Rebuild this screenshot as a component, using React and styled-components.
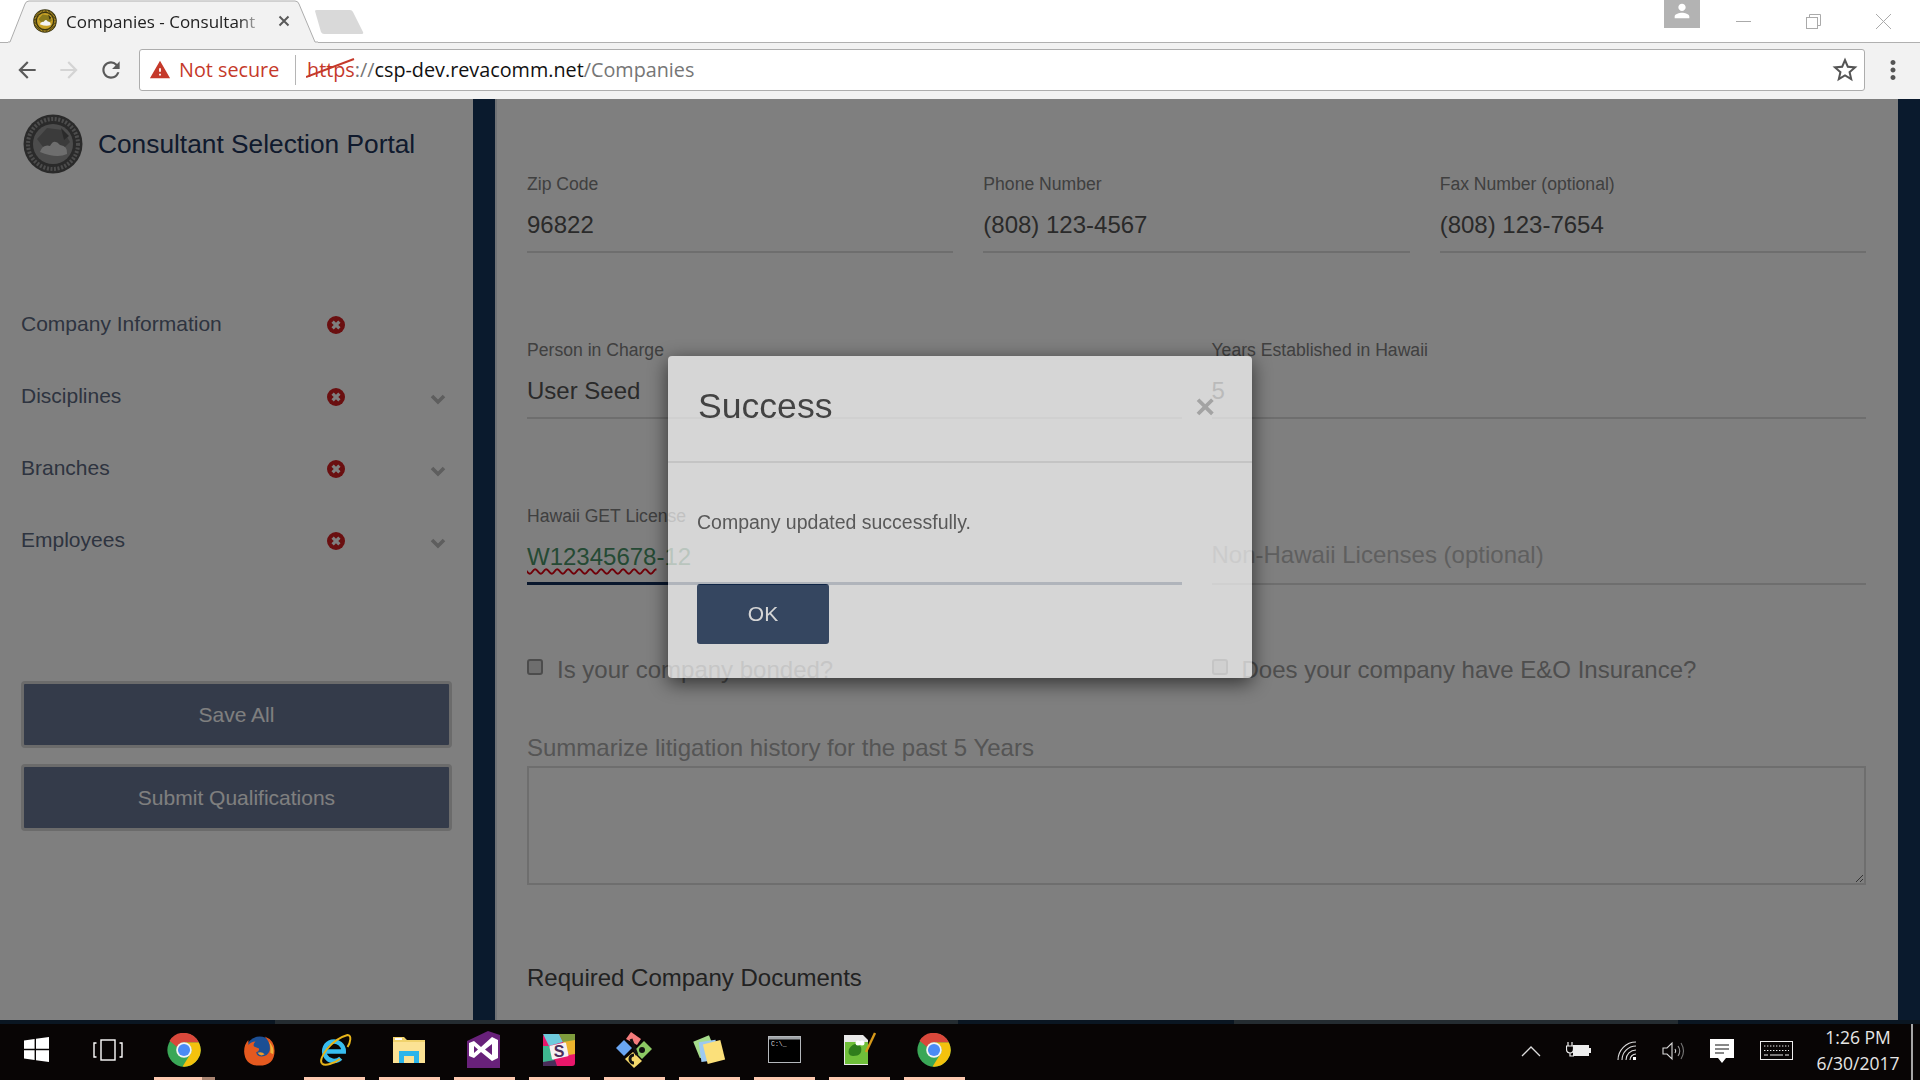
import React from 'react';
import styled, { createGlobalStyle } from 'styled-components';
import { MdArrowBack, MdArrowForward, MdRefresh, MdStarBorder, MdMoreVert, MdWarning, MdPerson } from 'react-icons/md';

const GlobalStyle = createGlobalStyle`
  html, body { margin: 0; padding: 0; background: #fff; }
  * { box-sizing: border-box; }
`;

const Screen = styled.div`
  width: 1920px;
  height: 1080px;
  display: flex;
  flex-direction: column;
  overflow: hidden;
  font-family: 'Liberation Sans', Arial, sans-serif;
`;

/* browser chrome */
const TabStrip = styled.div`
  height: 43px;
  display: flex;
  align-items: flex-start;
  background: #fff;
  border-bottom: 1px solid #b0b0b0;
  padding-left: 8px;
  font-family: 'Open Sans', sans-serif;
`;

const Tab = styled.div`
  position: relative;
  width: 310px;
  height: 43px;
  display: flex;
  align-items: center;
  padding: 0 0 1px 25px;
  gap: 9px;
`;

const TabShape = styled.svg`
  position: absolute;
  left: 0;
  top: 0;
`;

const TabIcon = styled.div`
  position: relative;
  display: flex;
`;

const TabTitle = styled.div`
  position: relative;
  width: 192px;
  font-size: 17px;
  color: #222;
  white-space: nowrap;
  -webkit-mask-image: linear-gradient(90deg, #000 90%, rgba(0, 0, 0, 0.25) 100%);
  mask-image: linear-gradient(90deg, #000 90%, rgba(0, 0, 0, 0.25) 100%);
`;

const TabClose = styled.svg`
  position: relative;
  margin-left: 11px;
`;

const NewTab = styled.svg`
  margin: 9px 0 0 -4px;
`;

const StripSpacer = styled.div`
  flex: 1;
`;

const Profile = styled.div`
  width: 36px;
  height: 28px;
  background: #b3b3b3;
  color: #fff;
  display: flex;
  justify-content: center;
  font-size: 22px;
`;

const WindowButtons = styled.div`
  display: flex;
  align-items: center;
  height: 42px;
  padding: 0 29px 0 36px;
  gap: 55px;
`;

const Toolbar = styled.div`
  height: 56px;
  background: #f2f2f2;
  display: flex;
  align-items: center;
  padding: 0 0 2px 14px;
  font-family: 'Open Sans', sans-serif;
`;

const NavButton = styled.div`
  width: 26px;
  display: flex;
  justify-content: center;
  margin-right: 16px;
  font-size: 28px;
  color: ${props => (props.disabled ? '#d4d4d4' : '#5a5a5a')};
`;

const Omnibox = styled.div`
  width: 1726px;
  height: 42px;
  margin-left: -1px;
  background: #fff;
  border: 1px solid #adadad;
  border-radius: 3px;
  display: flex;
  align-items: center;
  padding: 0 3px 1px 9px;
  font-size: 19.8px;
  white-space: nowrap;
`;

const SecurityWarning = styled.div`
  display: flex;
  align-items: center;
  gap: 8px;
  width: 147px;
  height: 30px;
  color: #c5392a;
  border-right: 1px solid #b5b5b5;
  margin-right: 11px;
`;

const UrlScheme = styled.span`
  position: relative;
  color: #c5392a;
`;

const Strike = styled.svg`
  position: absolute;
  left: -1px;
  top: 1px;
`;

const UrlDim = styled.span`
  color: #767676;
`;

const UrlHost = styled.span`
  color: #111;
`;

const UrlFill = styled.div`
  flex: 1;
`;

const StarButton = styled.div`
  display: flex;
  font-size: 30px;
  color: #555;
  margin-right: 1px;
`;

const MenuDots = styled.div`
  display: flex;
  width: 55px;
  justify-content: center;
  font-size: 30px;
  color: #555;
`;

/* page */
const Viewport = styled.div`
  position: relative;
  height: 921px;
  display: flex;
  overflow: hidden;
`;

const Sidebar = styled.aside`
  width: 473px;
  flex: none;
  background: #fff;
  padding: 15px 0 0 21px;
`;

const Brand = styled.div`
  display: flex;
  align-items: center;
  height: 60px;
  padding-left: 2px;
  gap: 15px;
  margin-bottom: 114px;
`;

const BrandName = styled.div`
  font-size: 26.3px;
  padding-top: 1px;
  color: #20345a;
`;

const MenuRow = styled.div`
  height: 72px;
  display: flex;
  align-items: center;
`;

const MenuName = styled.div`
  width: 306px;
  font-size: 21px;
  color: #5c6880;
`;

const ErrorMark = styled.svg`
  margin-top: 2px;
`;

const Chevron = styled.svg`
  margin: 6px 0 0 85px;
`;

const SideButton = styled.button`
  display: block;
  width: 431px;
  height: 67px;
  margin-bottom: 16px;
  background: #687694;
  border: 3px solid #d6d6d6;
  border-radius: 4px;
  color: #fff;
  font-family: inherit;
  font-size: 21px;
  &:first-of-type { margin-top: 105px; }
`;

const Rail = styled.div`
  width: ${props => props.$width}px;
  flex: none;
  background: #14345a;
  border-right: ${props => (props.$edge ? '2px solid #dfe3e8' : 'none')};
`;

const Main = styled.main`
  flex: 1;
  background: #fff;
  padding: 75px 32px 0 30px;
`;

const FieldRow = styled.div`
  display: grid;
  grid-template-columns: repeat(${props => props.$cols}, 1fr);
  gap: 30px;
  margin-bottom: 87px;
`;

const FieldLabel = styled.div`
  height: 20px;
  line-height: 20px;
  font-size: 17.6px;
  color: #808080;
  white-space: nowrap;
`;

const FieldValue = styled.div`
  height: 59px;
  padding-top: ${props => (props.$empty ? '15px' : '17px')};
  line-height: 28px;
  font-size: 24px;
  color: ${props => (props.$green ? '#4a9468' : props.$empty ? '#bebebe' : '#555')};
  border-bottom: ${props => (props.$focused ? '3px solid #122e5a' : '2px solid #dcdcdc')};
  white-space: nowrap;
`;

const Misspelt = styled.span`
  text-decoration: underline wavy #e00010 1.5px;
  text-underline-offset: 3px;
`;

const CheckRow = styled.div`
  display: grid;
  grid-template-columns: repeat(2, 1fr);
  gap: 30px;
  margin: -16px 0 50px;
`;

const CheckLabel = styled.label`
  display: flex;
  align-items: center;
  gap: 14px;
  font-size: 24px;
  line-height: 28px;
  color: #9c9c9c;
`;

const CheckBox = styled.span`
  width: 16px;
  height: 16px;
  margin-top: -6px;
  background: #ddd;
  border: 2px solid #999;
  border-radius: 3px;
`;

const AreaLabel = styled.div`
  font-size: 24px;
  line-height: 28px;
  color: #aaa;
  margin-bottom: 4px;
`;

const Area = styled.textarea`
  display: block;
  width: 100%;
  height: 119px;
  border: 2px solid #dcdcdc;
  background: #fff;
  resize: vertical;
  outline: none;
  margin-bottom: 79px;
`;

const SectionTitle = styled.div`
  font-size: 24px;
  line-height: 28px;
  color: #444;
`;

/* success dialog */
const Backdrop = styled.div`
  position: absolute;
  inset: 0;
  background: rgba(0, 0, 0, 0.5);
  display: flex;
  justify-content: center;
  align-items: flex-start;
  padding-top: 257px;
`;

const Dialog = styled.div`
  width: 584px;
  height: 322px;
  background: #fff;
  border-radius: 4px;
  opacity: 0.677;
  box-shadow: 0 5px 20px rgba(0, 0, 0, 0.9);
`;

const DialogHeader = styled.div`
  height: 107px;
  display: flex;
  align-items: center;
  justify-content: space-between;
  padding: 0 37px 4px 30px;
  border-bottom: 2px solid #e5e5e5;
`;

const DialogTitle = styled.h4`
  margin: 0;
  font-size: 35.6px;
  font-weight: normal;
  color: #282828;
`;

const DialogClose = styled.span`
  font-size: 34px;
  font-weight: bold;
  line-height: 1;
  padding-bottom: 2px;
  color: #b4b4b4;
`;

const DialogBody = styled.div`
  padding: 47px 0 0 29px;
`;

const Message = styled.div`
  height: 24px;
  line-height: 24px;
  font-size: 19.5px;
  color: #484848;
  margin-bottom: 50px;
`;

const OkButton = styled.button`
  width: 132px;
  height: 60px;
  background: #132c52;
  border: none;
  border-radius: 3px;
  color: #fff;
  font-family: inherit;
  font-size: 21px;
`;

/* taskbar */
const Taskbar = styled.div`
  height: 60px;
  background: #080505;
  display: flex;
  flex-direction: column;
  font-family: 'Open Sans', sans-serif;
`;

const ScrollBand = styled.div`
  height: 4px;
  flex: none;
  display: flex;
  background: #0a1622;
`;

const BandPiece = styled.div`
  width: ${props => props.$w}px;
  background: ${props => (props.$lit ? '#242c31' : 'transparent')};
`;

const TaskRow = styled.div`
  flex: 1;
  display: flex;
  align-items: stretch;
`;

const SysButton = styled.div`
  width: ${props => props.$w}px;
  display: flex;
  align-items: center;
  justify-content: center;
  padding-bottom: 5px;
`;

const TaskView = styled.svg`
  margin-right: 4px;
`;

const AppTile = styled.div`
  width: 61px;
  margin: 0 7px;
  padding: 0 1px 2px 0;
  display: flex;
  align-items: center;
  justify-content: center;
  border-bottom: 3px solid ${props => (props.$open ? '#fcc9b0' : 'transparent')};
  ${props => props.$split && 'border-image: linear-gradient(90deg, #fcc9b0 77%, #a98572 77%) 1;'}
`;

const Tray = styled.div`
  margin-left: auto;
  display: flex;
  align-items: center;
  padding-right: 7px;
`;

const TraySlot = styled.div`
  width: ${props => props.$w}px;
  display: flex;
  justify-content: center;
  padding-bottom: 2px;
`;

const Clock = styled.div`
  width: 96px;
  margin-left: 5px;
  padding-bottom: 4px;
  text-align: center;
  color: #e6e6e6;
  font-size: 17.5px;
  line-height: 26px;
`;

const DesktopEdge = styled.div`
  width: 2px;
  align-self: stretch;
  background: #a5a5a5;
  margin-left: 5px;
`;

const Seal = ({ size, ring, inner, land, cloud }) => (
  <svg width={size} height={size} viewBox="0 0 60 60">
    <circle cx="30" cy="30" r="29.5" fill={ring} />
    <circle cx="30" cy="30" r="25" fill="none" stroke={inner} strokeWidth="4" strokeDasharray="2 1.6" />
    <circle cx="30" cy="30" r="20" fill={inner} />
    <path d="M14 25 L24 14 L40 16 L47 28 L42 33 L20 33 Z" fill={land} />
    <path d="M17 38 Q20 30 27 32 Q31 24 37 31 Q45 32 44 40 Q34 45 17 38 Z" fill={cloud} />
    <path d="M38 14 L46 22 L41 26 Z" fill={ring} />
  </svg>
);

const ErrorIcon = () => (
  <ErrorMark width="18" height="18" viewBox="0 0 18 18">
    <circle cx="9" cy="9" r="9" fill="#d41e20" />
    <path d="M5.6 5.6 L12.4 12.4 M12.4 5.6 L5.6 12.4" stroke="#fff" strokeWidth="3.2" />
  </ErrorMark>
);

const DownIcon = () => (
  <Chevron width="16" height="11" viewBox="0 0 16 11">
    <path d="M2 2 L8 8 L14 2" fill="none" stroke="#bcbcbc" strokeWidth="3.6" />
  </Chevron>
);

const ChromeIcon = () => (
  <svg width="34" height="34" viewBox="0 0 48 48">
    <circle cx="24" cy="24" r="23.5" fill="#3aa757" />
    <path d="M3.6 11 A23.5 23.5 0 0 1 45 13.5 H24 A10.5 10.5 0 0 0 14.6 20 Z" fill="#d9483b" />
    <path d="M45 13.5 A23.5 23.5 0 0 1 22 47.4 L33 29.5 A10.5 10.5 0 0 0 24 13.5 Z" fill="#f4c20d" />
    <circle cx="24" cy="24" r="11" fill="#f4f4f4" />
    <circle cx="24" cy="24" r="8.6" fill="#4b8bf5" />
  </svg>
);

const FirefoxIcon = () => (
  <svg width="34" height="34" viewBox="0 0 48 48">
    <circle cx="25" cy="25" r="20" fill="#1c4f94" />
    <path d="M32 5 Q46 10 46 25 Q46 46 24 46 Q4 46 3 26 Q3 16 9 10 L9 17 Q13 12 19 12 Q15 16 17 19 L24 22 Q25 26 20 27 Q21 33 28 33 Q36 33 39 25 Q41 14 32 5 Z" fill="#e4591f" />
    <path d="M38 12 Q46 20 44 30 L40 28 Q41 18 38 12 Z" fill="#f0b43a" />
    <path d="M22 28 Q28 26 32 30 Q26 34 22 28 Z" fill="#f09a28" />
  </svg>
);

const EdgeIcon = () => (
  <svg width="36" height="36" viewBox="0 0 48 48">
    <path d="M13 26 H37 A13 13 0 1 0 33 35" fill="none" stroke="#37bdf0" strokeWidth="6" />
    <path d="M8 42 C2 36 20 10 42 4 C48 4 46 14 42 20" fill="none" stroke="#e8b51a" strokeWidth="2.6" />
    <path d="M8 42 C12 46 24 42 32 36" fill="none" stroke="#e8b51a" strokeWidth="2.6" />
  </svg>
);

const FolderIcon = () => (
  <svg width="34" height="30" viewBox="0 0 34 30">
    <path d="M1 2 H12 L15 5 H33 V28 H1 Z" fill="#f0d26c" />
    <path d="M1 7 H33 V28 H1 Z" fill="#fbe294" />
    <rect x="3" y="3" width="7" height="2" fill="#fff" />
    <path d="M7 28 V16 H27 V28 H22 V21 H12 V28 Z" fill="#2bb5ea" />
  </svg>
);

const VsIcon = () => (
  <svg width="36" height="38" viewBox="0 0 36 38">
    <path d="M1 10 L22 0 L34 4 V37 L22 37 L1 37 Z" fill="#68217a" />
    <path d="M3 12 L8 10 L15 16 L26 6 L32 9 V27 L26 30 L15 21 L8 27 L3 25 Z M8 15 V22 L12 18.5 Z M26 13 L19 18.5 L26 24 Z" fill="#fff" fillRule="evenodd" />
  </svg>
);

const SlackIcon = () => (
  <svg width="32" height="32" viewBox="0 0 32 32">
    <rect width="32" height="32" rx="3" fill="#e9176b" />
    <path d="M0 0 H16 L20 8 L6 12 Z" fill="#6ecadc" />
    <path d="M16 0 H32 V8 L20 8 Z" fill="#7e9c3d" />
    <path d="M20 8 L32 6 V20 L26 21 Z" fill="#ecb32d" />
    <path d="M6 12 L12 28 L0 32 V12 Z" fill="#3eb890" />
    <path d="M0 28 L12 26 L14 32 H0 Z" fill="#4a2d5a" />
    <rect x="7.5" y="10" width="17" height="14" rx="1" fill="#f5f0f2" transform="rotate(-12 16 17)" />
    <text x="16" y="22.5" textAnchor="middle" fontFamily="'Liberation Sans'" fontWeight="bold" fontSize="16" fill="#4a2d5a">S</text>
  </svg>
);

const KrakenIcon = () => (
  <svg width="38" height="38" viewBox="0 0 38 38">
    <path d="M11 8 L16 1 L26 8 L22 14 Z" fill="#f47c7c" />
    <path d="M9 9 L17 17 L9 25 L1 17 Z" fill="#6aa6f2" />
    <path d="M29 10 L37 18 L27 28 L19 20 Z" fill="#8cc964" />
    <path d="M18 21 L27 30 L19 37 L10 28 Z" fill="#f6d96b" />
    <path d="M16 8 L22 24 M19 24 A4 4 0 1 0 19 32" stroke="#111" strokeWidth="3" fill="none" />
    <circle cx="27" cy="19" r="3" fill="#111" />
  </svg>
);

const NotesIcon = () => (
  <svg width="34" height="34" viewBox="0 0 34 34">
    <rect x="4" y="5" width="17" height="18" fill="#a6dc8c" transform="rotate(-22 12 14)" />
    <rect x="8" y="8" width="17" height="20" fill="#9cc9f0" transform="rotate(-8 16 18)" />
    <rect x="13" y="9" width="18" height="20" fill="#fbe07a" transform="rotate(-14 22 19)" />
  </svg>
);

const ConsoleIcon = () => (
  <svg width="33" height="27" viewBox="0 0 33 27">
    <rect x="0.5" y="0.5" width="32" height="26" fill="#000" stroke="#b4b8bc" />
    <rect x="1" y="1" width="31" height="2.5" fill="#9ea2a6" />
    <text x="3" y="10" fontFamily="'Liberation Mono'" fontSize="6.5" fill="#ddd">C:\_</text>
  </svg>
);

const NotepadIcon = () => (
  <svg width="36" height="36" viewBox="0 0 36 36">
    <path d="M3 3 H22 L27 8 V33 H3 Z" fill="#e8e8e8" />
    <rect x="4" y="10" width="23" height="22" fill="#6fbf3a" />
    <path d="M8 17 Q14 8 20 15 Q22 24 12 24 Q6 24 8 17 Z" fill="#2f7d1c" />
    <circle cx="17" cy="11" r="2.5" fill="#fff" />
    <circle cx="21" cy="11" r="2.5" fill="#fff" />
    <path d="M25 20 L34 1" stroke="#d89a1a" strokeWidth="2.4" />
  </svg>
);

const WindowsLogo = () => (
  <svg width="25" height="25" viewBox="0 0 25 25">
    <path d="M0 3.6 L10.6 2 V11.8 H0 Z M12 1.8 L25 0 V11.8 H12 Z M0 13.2 H10.6 V23 L0 21.4 Z M12 13.2 H25 V25 L12 23.2 Z" fill="#fff" />
  </svg>
);

const TaskViewIcon = () => (
  <TaskView width="30" height="22" viewBox="0 0 30 22" fill="none" stroke="#fff" strokeWidth="1.4">
    <rect x="8" y="1" width="14" height="20" />
    <path d="M3.5 4 H1 V18 H3.5 M26.5 4 H29 V18 H26.5" />
  </TaskView>
);

const CaretIcon = () => (
  <svg width="20" height="12" viewBox="0 0 20 12">
    <path d="M1 11 L10 2 L19 11" fill="none" stroke="#ddd" strokeWidth="1.3" />
  </svg>
);

const PowerIcon = () => (
  <svg width="26" height="20" viewBox="0 0 26 20">
    <path d="M2 1 V5 M6 1 V5 M0.5 5 H7.5 V8 Q7.5 12 4 12 Q0.5 12 0.5 8 Z M4 12 V15 H8" fill="none" stroke="#eee" strokeWidth="1.2" />
    <rect x="7" y="4" width="16" height="11" fill="#eee" />
    <rect x="23" y="7" width="2" height="5" fill="#eee" />
  </svg>
);

const WifiIcon = () => (
  <svg width="20" height="20" viewBox="0 0 20 20" fill="none" stroke="#ddd" strokeWidth="1.1">
    <path d="M1 19 A18 18 0 0 1 19 1" />
    <path d="M5 19 A14 14 0 0 1 19 5" />
    <path d="M9 19 A10 10 0 0 1 19 9" />
    <path d="M13 19 A6 6 0 0 1 19 13" />
    <rect x="16" y="16" width="3" height="3" fill="#fff" stroke="none" />
  </svg>
);

const VolumeIcon = () => (
  <svg width="24" height="20" viewBox="0 0 24 20" fill="none" stroke="#ddd" strokeWidth="1.1">
    <path d="M1 7 H5 L10 2 V18 L5 13 H1 Z" />
    <path d="M13 8 Q14.5 10 13 12" />
    <path d="M16 5 Q19.5 10 16 15" stroke="#999" />
    <path d="M19 2 Q24 10 19 18" stroke="#777" />
  </svg>
);

const ActionCenterIcon = () => (
  <svg width="24" height="25" viewBox="0 0 24 25">
    <path d="M0 0 H24 V19 H16 L12 24 L8 19 H0 Z" fill="#fff" />
    <path d="M5 6 H19 M5 10 H19 M5 14 H14" stroke="#111" strokeWidth="1.2" />
  </svg>
);

const KeyboardIcon = () => (
  <svg width="33" height="20" viewBox="0 0 33 20" fill="none" stroke="#eee">
    <rect x="0.5" y="0.5" width="32" height="18" strokeWidth="1" />
    <path d="M4 5 H29 M4 9.5 H29" strokeDasharray="1.4 1.6" />
    <path d="M4 14 H8 M10 14 H23 M25 14 H29" />
  </svg>
);

const tiles = [
  { key: 'chrome', icon: <ChromeIcon />, open: true, split: true },
  { key: 'firefox', icon: <FirefoxIcon /> },
  { key: 'ie', icon: <EdgeIcon />, open: true },
  { key: 'explorer', icon: <FolderIcon />, open: true },
  { key: 'vs', icon: <VsIcon />, open: true },
  { key: 'slack', icon: <SlackIcon />, open: true },
  { key: 'kraken', icon: <KrakenIcon />, open: true },
  { key: 'notes', icon: <NotesIcon />, open: true },
  { key: 'console', icon: <ConsoleIcon />, open: true },
  { key: 'notepad', icon: <NotepadIcon />, open: true },
  { key: 'chrome2', icon: <ChromeIcon />, open: true },
];

const menu = [
  { name: 'Company Information' },
  { name: 'Disciplines', more: true },
  { name: 'Branches', more: true },
  { name: 'Employees', more: true },
];

const Field = ({ label, children, ...rest }) => (
  <div>
    <FieldLabel>{label}</FieldLabel>
    <FieldValue {...rest}>{children}</FieldValue>
  </div>
);

const App = () => (
  <Screen>
    <GlobalStyle />
    <TabStrip>
      <Tab>
        <TabShape width="310" height="43" viewBox="0 0 310 43">
          <path d="M0 42 H2 L17 4 Q18 1 21 1 H287 Q290 1 291 4 L307 42 H310 V43 H0 Z" fill="#f2f2f2" />
          <path d="M0 42 H2 L17 4 Q18 1 21 1 H287 Q290 1 291 4 L307 42 H310" fill="none" stroke="#adadad" />
        </TabShape>
        <TabIcon>
          <Seal size={24} ring="#3a3410" inner="#c9a227" land="#8a7a1c" cloud="#f4f4f4" />
        </TabIcon>
        <TabTitle>Companies - Consultant</TabTitle>
        <TabClose width="12" height="12" viewBox="0 0 12 12">
          <path d="M1.5 1.5 L10.5 10.5 M10.5 1.5 L1.5 10.5" stroke="#5a5a5a" strokeWidth="2" />
        </TabClose>
      </Tab>
      <NewTab width="50" height="26" viewBox="0 0 50 26">
        <path d="M1 2 Q1 1 3 1 H36 Q38 1 39 3 L49 23 Q50 25 47 25 H10 Q8 25 7 23 Z" fill="#d9d9d9" />
      </NewTab>
      <StripSpacer />
      <Profile><MdPerson /></Profile>
      <WindowButtons>
        <svg width="15" height="15" viewBox="0 0 15 15"><path d="M0 7.5 H15" stroke="#aaa" /></svg>
        <svg width="15" height="15" viewBox="0 0 15 15" fill="none" stroke="#aaa"><path d="M3.5 3 V0.5 H14.5 V11.5 H12" /><rect x="0.5" y="3.5" width="11" height="11" /></svg>
        <svg width="15" height="15" viewBox="0 0 15 15"><path d="M0 0 L15 15 M15 0 L0 15" stroke="#aaa" /></svg>
      </WindowButtons>
    </TabStrip>
    <Toolbar>
      <NavButton><MdArrowBack /></NavButton>
      <NavButton disabled><MdArrowForward /></NavButton>
      <NavButton><MdRefresh /></NavButton>
      <Omnibox>
        <SecurityWarning>
          <MdWarning size={22} />
          <span>Not secure</span>
        </SecurityWarning>
        <UrlScheme>
          https
          <Strike width="50" height="24" viewBox="0 0 50 24">
            <path d="M0 20 L48 2" stroke="#c5392a" strokeWidth="2" />
          </Strike>
        </UrlScheme>
        <UrlDim>://</UrlDim>
        <UrlHost>csp-dev.revacomm.net</UrlHost>
        <UrlDim>/Companies</UrlDim>
        <UrlFill />
        <StarButton><MdStarBorder /></StarButton>
      </Omnibox>
      <MenuDots><MdMoreVert /></MenuDots>
    </Toolbar>
    <Viewport>
      <Sidebar>
        <Brand>
          <Seal size={60} ring="#555" inner="#999" land="#777" cloud="#ddd" />
          <BrandName>Consultant Selection Portal</BrandName>
        </Brand>
        {menu.map(item => (
          <MenuRow key={item.name}>
            <MenuName>{item.name}</MenuName>
            <ErrorIcon />
            {item.more && <DownIcon />}
          </MenuRow>
        ))}
        <SideButton>Save All</SideButton>
        <SideButton>Submit Qualifications</SideButton>
      </Sidebar>
      <Rail $width={24} $edge />
      <Main>
        <FieldRow $cols={3}>
          <Field label="Zip Code">96822</Field>
          <Field label="Phone Number">(808) 123-4567</Field>
          <Field label="Fax Number (optional)">(808) 123-7654</Field>
        </FieldRow>
        <FieldRow $cols={2}>
          <Field label="Person in Charge">User Seed</Field>
          <Field label="Years Established in Hawaii">5</Field>
        </FieldRow>
        <FieldRow $cols={2}>
          <Field label="Hawaii GET License" $green $focused><Misspelt>W12345678</Misspelt>-12</Field>
          <Field label="" $empty>Non-Hawaii Licenses (optional)</Field>
        </FieldRow>
        <CheckRow>
          <CheckLabel><CheckBox />Is your company bonded?</CheckLabel>
          <CheckLabel><CheckBox />Does your company have E&amp;O Insurance?</CheckLabel>
        </CheckRow>
        <AreaLabel>Summarize litigation history for the past 5 Years</AreaLabel>
        <Area />
        <SectionTitle>Required Company Documents</SectionTitle>
      </Main>
      <Rail $width={22} />
      <Backdrop>
        <Dialog>
          <DialogHeader>
            <DialogTitle>Success</DialogTitle>
            <DialogClose>×</DialogClose>
          </DialogHeader>
          <DialogBody>
            <Message>Company updated successfully.</Message>
            <OkButton>OK</OkButton>
          </DialogBody>
        </Dialog>
      </Backdrop>
    </Viewport>
    <Taskbar>
      <ScrollBand>
        <BandPiece $w={275} />
        <BandPiece $w={683} $lit />
        <BandPiece $w={276} />
        <BandPiece $w={444} $lit />
      </ScrollBand>
      <TaskRow>
        <SysButton $w={72}><WindowsLogo /></SysButton>
        <SysButton $w={75}><TaskViewIcon /></SysButton>
        {tiles.map(tile => (
          <AppTile key={tile.key} $open={tile.open} $split={tile.split}>{tile.icon}</AppTile>
        ))}
        <Tray>
          <TraySlot $w={48}><CaretIcon /></TraySlot>
          <TraySlot $w={48}><PowerIcon /></TraySlot>
          <TraySlot $w={48}><WifiIcon /></TraySlot>
          <TraySlot $w={46}><VolumeIcon /></TraySlot>
          <TraySlot $w={50}><ActionCenterIcon /></TraySlot>
          <TraySlot $w={58}><KeyboardIcon /></TraySlot>
          <Clock>1:26 PM<br />6/30/2017</Clock>
          <DesktopEdge />
        </Tray>
      </TaskRow>
    </Taskbar>
  </Screen>
);

export default App;
